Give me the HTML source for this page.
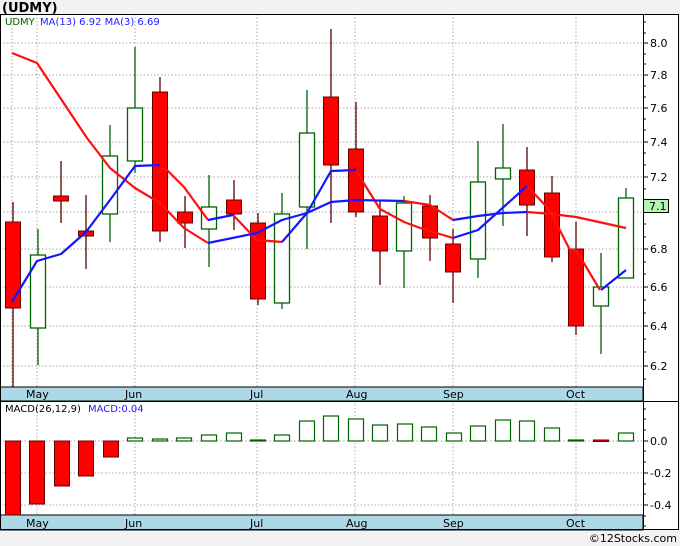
<!DOCTYPE html>
<html><head><meta charset="utf-8"><style>
html,body{margin:0;padding:0;background:#f2f2f2;}
svg{display:block;font-family:"DejaVu Sans","Liberation Sans",sans-serif;}
</style></head><body>
<svg width="680" height="546" viewBox="0 0 680 546" xmlns="http://www.w3.org/2000/svg">
<rect x="0" y="0" width="680" height="546" fill="#f2f2f2"/>
<text x="2" y="12" font-size="13" font-weight="bold" fill="#000">(UDMY)</text>
<rect x="0" y="14" width="679" height="516" fill="#fff"/>
<g stroke="#aaa" stroke-dasharray="1.5,2" stroke-width="1">
<line x1="0" x2="643" y1="43" y2="43"/><line x1="0" x2="643" y1="75" y2="75"/><line x1="0" x2="643" y1="108" y2="108"/>
<line x1="0" x2="643" y1="142" y2="142"/><line x1="0" x2="643" y1="177" y2="177"/><line x1="0" x2="643" y1="212" y2="212"/>
<line x1="0" x2="643" y1="249" y2="249"/><line x1="0" x2="643" y1="287" y2="287"/><line x1="0" x2="643" y1="326" y2="326"/>
<line x1="0" x2="643" y1="366" y2="366"/>
<line x1="12" x2="12" y1="14" y2="387"/><line x1="37" x2="37" y1="14" y2="387"/><line x1="135" x2="135" y1="14" y2="387"/>
<line x1="257" x2="257" y1="14" y2="387"/><line x1="355" x2="355" y1="14" y2="387"/><line x1="453" x2="453" y1="14" y2="387"/><line x1="576" x2="576" y1="14" y2="387"/>
<line x1="37" x2="37" y1="401" y2="515"/><line x1="135" x2="135" y1="401" y2="515"/>
<line x1="257" x2="257" y1="401" y2="515"/><line x1="355" x2="355" y1="401" y2="515"/><line x1="453" x2="453" y1="401" y2="515"/><line x1="576" x2="576" y1="401" y2="515"/>
<line x1="0" x2="643" y1="441" y2="441"/><line x1="0" x2="643" y1="473" y2="473"/><line x1="0" x2="643" y1="505" y2="505"/>
</g>
<text x="5" y="25" font-size="10" fill="#006400">UDMY</text>
<text x="40" y="25" font-size="10" fill="#2020ff">MA(13)  6.92  MA(3)  6.69</text>
<g stroke-width="1.3">
<g stroke="#5a0000">
<line x1="13" x2="13" y1="202" y2="387"/><line x1="61" x2="61" y1="161" y2="223"/><line x1="86" x2="86" y1="195" y2="269"/>
<line x1="160" x2="160" y1="77" y2="242"/><line x1="185" x2="185" y1="196" y2="248"/><line x1="234" x2="234" y1="180" y2="230"/>
<line x1="258" x2="258" y1="213" y2="305"/><line x1="331" x2="331" y1="29" y2="223"/><line x1="356" x2="356" y1="102" y2="217"/>
<line x1="380" x2="380" y1="200" y2="285"/><line x1="430" x2="430" y1="195" y2="261"/><line x1="453" x2="453" y1="229" y2="303"/>
<line x1="527" x2="527" y1="147" y2="236"/><line x1="552" x2="552" y1="176" y2="262"/><line x1="576" x2="576" y1="222" y2="335"/>
</g>
<g stroke="#006400">
<line x1="38" x2="38" y1="229" y2="365"/><line x1="110" x2="110" y1="125" y2="242"/><line x1="135" x2="135" y1="47" y2="173"/>
<line x1="209" x2="209" y1="175" y2="267"/><line x1="282" x2="282" y1="193" y2="309"/><line x1="307" x2="307" y1="90" y2="249"/>
<line x1="404" x2="404" y1="196" y2="288"/><line x1="478" x2="478" y1="141" y2="278"/><line x1="503" x2="503" y1="124" y2="226"/>
<line x1="601" x2="601" y1="253" y2="354"/><line x1="626" x2="626" y1="188" y2="198"/>
</g>
</g>
<g fill="#ff0000" stroke="#6a0000" stroke-width="1">
<rect x="5.5" y="222" width="15" height="86"/><rect x="53.5" y="196" width="15" height="5"/><rect x="78.5" y="231" width="15" height="5"/>
<rect x="152.5" y="92" width="15" height="139"/><rect x="177.5" y="212" width="15" height="11"/><rect x="226.5" y="200" width="15" height="14"/>
<rect x="250.5" y="223" width="15" height="76"/><rect x="323.5" y="97" width="15" height="68"/><rect x="348.5" y="149" width="15" height="63"/>
<rect x="372.5" y="216" width="15" height="35"/><rect x="422.5" y="206" width="15" height="32"/><rect x="445.5" y="244" width="15" height="28"/>
<rect x="519.5" y="170" width="15" height="35"/><rect x="544.5" y="193" width="15" height="64"/><rect x="568.5" y="249" width="15" height="77"/>
</g>
<g fill="#fff" stroke="#006400" stroke-width="1.3">
<rect x="30.5" y="255" width="15" height="73"/><rect x="102.5" y="156" width="15" height="58"/><rect x="127.5" y="108" width="15" height="53"/>
<rect x="201.5" y="207" width="15" height="22"/><rect x="274.5" y="214" width="15" height="89"/><rect x="299.5" y="133" width="15" height="74"/>
<rect x="396.5" y="203" width="15" height="48"/><rect x="470.5" y="182" width="15" height="77"/><rect x="495.5" y="168" width="15" height="11"/>
<rect x="593.5" y="287" width="15" height="19"/><rect x="618.5" y="198" width="15" height="80"/>
</g>
<g fill="none" stroke-width="2.2" stroke-linejoin="round">
<polyline stroke="#ff1010" points="12,53 37,63 87,138 110,168 135,188 160,203 184,228 208,243"/>
<polyline stroke="#ff1010" points="160,168 167,170 184,187 208,220"/>
<polyline stroke="#ff1010" points="233,215 257,240 282,242"/>
<polyline stroke="#ff1010" points="356,170 363,182 380,209 404,222 423,229 453,238"/>
<polyline stroke="#ff1010" points="404,201 430,205 453,220"/>
<polyline stroke="#ff1010" points="527,186 545,205 552,215 570,250 576,250 600,290"/>
<polyline stroke="#ff1010" points="527,212 552,214 576,217 626,228"/>
<polyline stroke="#1515ff" points="12,302 37,261 61,254 86,232 110,200 135,166 160,165"/>
<polyline stroke="#1515ff" points="208,220 233,215"/>
<polyline stroke="#1515ff" points="208,243 257,233 282,220 307,213 331,202 356,200 404,201"/>
<polyline stroke="#1515ff" points="282,242 307,213 331,171 356,170"/>
<polyline stroke="#1515ff" points="453,220 478,216 503,213 527,212"/>
<polyline stroke="#1515ff" points="453,238 478,230 527,186"/>
<polyline stroke="#1515ff" points="601,290 626,270"/>
</g>
<rect x="0" y="387" width="643" height="14" fill="#add8e6" stroke="#000" stroke-width="1"/>
<rect x="0" y="515" width="643" height="15" fill="#add8e6" stroke="#000" stroke-width="1"/>
<g font-size="11" fill="#000">
<text x="26" y="398">May</text><text x="125" y="398">Jun</text><text x="250" y="398">Jul</text><text x="346" y="398">Aug</text><text x="443" y="398">Sep</text><text x="566" y="398">Oct</text>
<text x="26" y="527">May</text><text x="125" y="527">Jun</text><text x="250" y="527">Jul</text><text x="346" y="527">Aug</text><text x="443" y="527">Sep</text><text x="566" y="527">Oct</text>
</g>
<text x="5" y="412" font-size="10" fill="#000">MACD(26,12,9)</text>
<text x="88" y="412" font-size="10" fill="#2020ff">MACD:0.04</text>
<g fill="#ff0000" stroke="#6a0000" stroke-width="1">
<rect x="5.5" y="441" width="15" height="74"/><rect x="29.5" y="441" width="15" height="63"/><rect x="54.5" y="441" width="15" height="45"/>
<rect x="78.5" y="441" width="15" height="35"/><rect x="103.5" y="441" width="15" height="16"/><rect x="593.5" y="440" width="15" height="1.5"/>
</g>
<g fill="#fff" stroke="#006400" stroke-width="1.2">
<rect x="127.5" y="438" width="15" height="3"/><rect x="152.5" y="439" width="15" height="2"/><rect x="176.5" y="438" width="15" height="3"/>
<rect x="201.5" y="435" width="15" height="6"/><rect x="226.5" y="433" width="15" height="8"/><rect x="250.5" y="440" width="15" height="1"/>
<rect x="274.5" y="435" width="15" height="6"/><rect x="299.5" y="421" width="15" height="20"/><rect x="323.5" y="416" width="15" height="25"/>
<rect x="348.5" y="419" width="15" height="22"/><rect x="372.5" y="425" width="15" height="16"/><rect x="397.5" y="424" width="15" height="17"/>
<rect x="421.5" y="427" width="15" height="14"/><rect x="446.5" y="433" width="15" height="8"/><rect x="470.5" y="426" width="15" height="15"/>
<rect x="495.5" y="420" width="15" height="21"/><rect x="519.5" y="421" width="15" height="20"/><rect x="544.5" y="428" width="15" height="13"/>
<rect x="568.5" y="440" width="15" height="1"/><rect x="618.5" y="433" width="15" height="8"/>
</g>
<rect x="0.5" y="14.5" width="678" height="515" fill="none" stroke="#000" stroke-width="1"/>
<line x1="643.5" x2="643.5" y1="14" y2="530" stroke="#000"/>
<line x1="0" x2="679" y1="401.5" y2="401.5" stroke="#000"/>
<g stroke="#000" stroke-width="1">
<line x1="643" x2="648" y1="43" y2="43"/><line x1="643" x2="648" y1="75" y2="75"/><line x1="643" x2="648" y1="108" y2="108"/>
<line x1="643" x2="648" y1="142" y2="142"/><line x1="643" x2="648" y1="177" y2="177"/><line x1="643" x2="648" y1="212" y2="212"/>
<line x1="643" x2="648" y1="249" y2="249"/><line x1="643" x2="648" y1="287" y2="287"/><line x1="643" x2="648" y1="326" y2="326"/>
<line x1="643" x2="648" y1="366" y2="366"/>
<line x1="643" x2="648" y1="441" y2="441"/><line x1="643" x2="648" y1="473" y2="473"/><line x1="643" x2="648" y1="505" y2="505"/>
</g>
<g stroke="#000" stroke-width="1">
<line x1="643" x2="646" y1="22" y2="22"/><line x1="643" x2="646" y1="33" y2="33"/><line x1="643" x2="646" y1="54" y2="54"/><line x1="643" x2="646" y1="64" y2="64"/>
<line x1="643" x2="646" y1="86" y2="86"/><line x1="643" x2="646" y1="97" y2="97"/><line x1="643" x2="646" y1="119" y2="119"/><line x1="643" x2="646" y1="130" y2="130"/>
<line x1="643" x2="646" y1="153" y2="153"/><line x1="643" x2="646" y1="165" y2="165"/><line x1="643" x2="646" y1="189" y2="189"/><line x1="643" x2="646" y1="200" y2="200"/>
<line x1="643" x2="646" y1="224" y2="224"/><line x1="643" x2="646" y1="237" y2="237"/><line x1="643" x2="646" y1="262" y2="262"/><line x1="643" x2="646" y1="274" y2="274"/>
<line x1="643" x2="646" y1="300" y2="300"/><line x1="643" x2="646" y1="313" y2="313"/><line x1="643" x2="646" y1="339" y2="339"/><line x1="643" x2="646" y1="352" y2="352"/>
<line x1="643" x2="646" y1="379" y2="379"/>
<line x1="643" x2="646" y1="409" y2="409"/><line x1="643" x2="646" y1="419" y2="419"/><line x1="643" x2="646" y1="430" y2="430"/>
<line x1="643" x2="646" y1="451" y2="451"/><line x1="643" x2="646" y1="462" y2="462"/><line x1="643" x2="646" y1="484" y2="484"/><line x1="643" x2="646" y1="494" y2="494"/>
<line x1="643" x2="646" y1="516" y2="516"/><line x1="643" x2="646" y1="526" y2="526"/>
</g>
<g font-size="11" fill="#000">
<text x="650" y="47">8.0</text><text x="650" y="79">7.8</text><text x="650" y="112">7.6</text><text x="650" y="146">7.4</text>
<text x="650" y="181">7.2</text><text x="650" y="253">6.8</text><text x="650" y="291">6.6</text><text x="650" y="330">6.4</text><text x="650" y="370">6.2</text>
<text x="650" y="445">0.0</text><text x="650" y="477">-0.2</text><text x="650" y="509">-0.4</text>
</g>
<rect x="643.5" y="199.5" width="25" height="13" fill="#b3f5b3" stroke="#000"/>
<text x="649" y="210" font-size="11" fill="#000">7.1</text>
<text x="677" y="542" font-size="11" fill="#000" text-anchor="end">©12Stocks.com</text>
</svg>
</body></html>
